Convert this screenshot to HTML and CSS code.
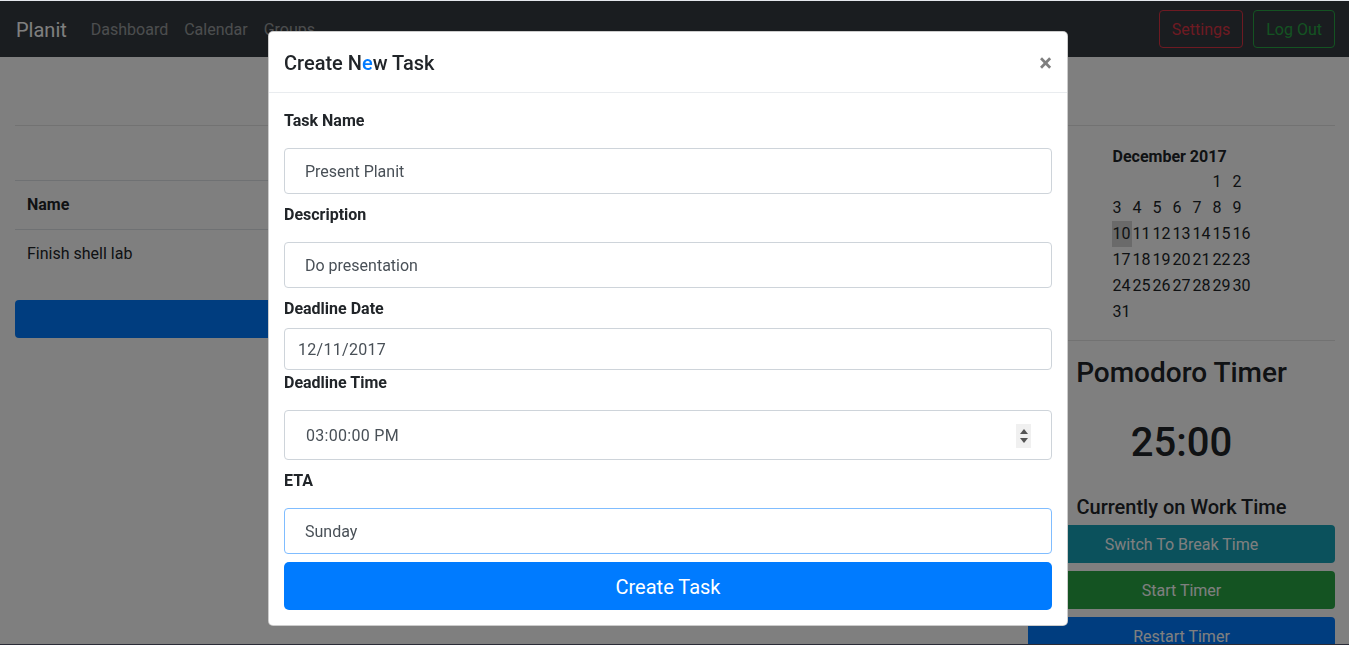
FILE: index.html
```html
<!DOCTYPE html>
<html lang="en">
<head>
<meta charset="utf-8">
<title>Planit</title>
<link rel="stylesheet" href="styles.css">
</head>
<body>
<div class="topline"></div>
<nav class="navbar">
  <a class="brand">Planit</a>
  <a class="nav-link">Dashboard</a>
  <a class="nav-link">Calendar</a>
  <a class="nav-link">Groups</a>
  <div class="nav-right">
    <button class="btn-outline danger">Settings</button>
    <button class="btn-outline success">Log Out</button>
  </div>
</nav>

<main class="container">
  <hr class="rule top-rule">
  <div class="layout">
    <section class="left-col">
      <table class="task-table">
        <thead><tr><th>Name</th></tr></thead>
        <tbody><tr><td>Finish shell lab</td></tr></tbody>
      </table>
      <button class="btn-block primary">New Task</button>
    </section>
    <aside class="right-col">
      <div class="calendar">
        <div class="cal-title">December 2017</div>
        <table class="cal-grid">
          <tr><td></td><td></td><td></td><td></td><td></td><td>1</td><td>2</td></tr>
          <tr><td>3</td><td>4</td><td>5</td><td>6</td><td>7</td><td>8</td><td>9</td></tr>
          <tr><td class="today">10</td><td>11</td><td>12</td><td>13</td><td>14</td><td>15</td><td>16</td></tr>
          <tr><td>17</td><td>18</td><td>19</td><td>20</td><td>21</td><td>22</td><td>23</td></tr>
          <tr><td>24</td><td>25</td><td>26</td><td>27</td><td>28</td><td>29</td><td>30</td></tr>
          <tr><td>31</td><td></td><td></td><td></td><td></td><td></td><td></td></tr>
        </table>
      </div>
      <div class="pomodoro">
        <h3 class="pomo-title">Pomodoro Timer</h3>
        <h1 class="pomo-time">25:00</h1>
        <h5 class="pomo-mode">Currently on Work Time</h5>
        <div class="pomo-buttons">
          <button class="btn-block info">Switch To Break Time</button>
          <button class="btn-block success-fill">Start Timer</button>
          <button class="btn-block primary">Restart Timer</button>
        </div>
      </div>
    </aside>
  </div>
</main>

<div class="backdrop"></div>
<div class="bottomline"></div>

<div class="modal">
  <div class="modal-header">
    <h5 class="modal-title">Create N<span class="accent">e</span>w Task</h5>
    <span class="close">&times;</span>
  </div>
  <form class="modal-body">
    <label class="lbl">Task Name</label>
    <input class="field f46 mt16" type="text" value="Present Planit">
    <label class="lbl mt8">Description</label>
    <input class="field f46 mt16" type="text" value="Do presentation">
    <label class="lbl mt8">Deadline Date</label>
    <div class="field f42 mt8 date-field">12/11/2017</div>
    <label class="lbl">Deadline Time</label>
    <div class="field f50 mt16 time-field">
      <span>03:00:00 PM</span>
      <span class="spinner"><span class="tri up"></span><span class="tri down"></span></span>
    </div>
    <label class="lbl mt8">ETA</label>
    <input class="field f46 mt16 focused" type="text" value="Sunday">
    <button type="button" class="submit mt8">Create Task</button>
  </form>
</div>
</body>
</html>
```

FILE: styles.css
```css
* { box-sizing: border-box; }
html, body { margin: 0; padding: 0; }
body {
  font-family: Roboto, "Liberation Sans", sans-serif;
  font-size: 16px;
  line-height: 24px;
  color: #212529;
  background: #fff;
  height: 645px;
  overflow: hidden;
}
.topline { height: 1px; background: #e4e7ec; }

.navbar {
  height: 56px;
  background: #343a40;
  display: flex;
  align-items: center;
  padding: 1px 14px 0 16px;
}
.brand { color: #fff; font-size: 20px; line-height: 30px; margin-right: 16px; }
.nav-link { color: rgba(255,255,255,.5); padding: 0 8px; }
.nav-right { margin-left: auto; display: flex; gap: 10px; margin-top: -1px; }
.btn-outline {
  font: inherit;
  height: 38px;
  padding: 2px 12px 0;
  background: transparent;
  border: 1px solid;
  border-radius: 4px;
}
.btn-outline.danger { color: #dc3545; border-color: #dc3545; }
.btn-outline.success { color: #28a745; border-color: #28a745; }

.container { padding: 0 14px 0 15px; }
.rule { border: 0; border-top: 1px solid rgba(0,0,0,.1); margin: 0; }
.top-rule { margin-top: 68px; margin-bottom: 16px; }
.layout { display: grid; grid-template-columns: 1fr 307px; column-gap: 30px; }

.task-table { width: 100%; border-collapse: collapse; margin-top: 38px; }
.task-table th, .task-table td {
  text-align: left;
  padding: 12px;
  border-top: 1px solid #dee2e6;
}
.task-table th { font-weight: 700; }
.btn-block {
  display: block;
  width: 100%;
  height: 38px;
  font: inherit;
  color: #fff;
  border: 0;
  border-radius: 4px;
  padding: 2px 0 0;
}
.left-col .btn-block { margin-top: 22px; }
.primary { background: #007bff; }
.info { background: #17a2b8; }
.success-fill { background: #28a745; }

.calendar { display: flex; flex-direction: column; align-items: center; margin-top: 2px; }
.cal-title { width: 140px; font-weight: 700; line-height: 25px; padding-left: 1px; }
.cal-grid { border-collapse: collapse; width: 140px; }
.cal-grid td { width: 20px; height: 26px; padding: 0 0 0 1px; text-align: left; }
.cal-grid td.today { background: #d4d4d4; }

.pomodoro { border-top: 1px solid rgba(0,0,0,.1); margin-top: 15px; text-align: center; }
.pomo-title { font-size: 28px; font-weight: 500; line-height: 34px; margin: 15px 0 0; }
.pomo-time { font-size: 40px; font-weight: 500; line-height: 48px; margin: 29px 0 0; }
.pomo-mode { font-size: 20px; font-weight: 500; line-height: 24px; margin: 28px 0 0; }
.pomo-buttons { display: flex; flex-direction: column; gap: 8px; margin-top: 6px; }

.backdrop { position: fixed; left: 0; right: 0; top: 1px; bottom: 0; background: rgba(0,0,0,.5); }
.bottomline { position: fixed; left: 0; right: 0; bottom: 0; height: 1px; background: #2a2b36; }

.modal {
  position: absolute;
  top: 31px;
  left: 268px;
  width: 800px;
  background: #fff;
  border: 1px solid rgba(0,0,0,.2);
  border-radius: 5px;
}
.modal-header {
  display: flex;
  align-items: center;
  justify-content: space-between;
  padding: 16px 15px 14px 15px;
  border-bottom: 1px solid #e9ecef;
}
.modal-title { margin: 0; font-size: 20px; font-weight: 500; line-height: 30px; }
.accent { color: #007bff; }
.close { font-size: 24px; font-weight: 700; color: #000; opacity: .5; line-height: 30px; margin-right: 0; }

.modal-body { padding: 15px; display: flex; flex-direction: column; }
.lbl { font-weight: 700; line-height: 22px; height: 24px; padding-top: 2px; }
.mt8 { margin-top: 8px; }
.mt16 { margin-top: 16px; }
.field {
  font: inherit;
  color: #495057;
  border: 1px solid #ced4da;
  border-radius: 4px;
  padding: 0 20px;
  background: #fff;
  outline: none;
  width: 100%;
}
.f46 { height: 46px; }
.f42 { height: 42px; }
.f50 { height: 50px; }
.date-field { display: flex; align-items: center; padding-left: 13px; padding-top: 1px; letter-spacing: .3px; }
.time-field { display: flex; align-items: center; justify-content: space-between; padding-left: 21px; padding-right: 20px; padding-top: 1px; letter-spacing: .3px; }
.spinner {
  width: 15px; height: 24px; background: #f0f0f0;
  display: flex; flex-direction: column; align-items: center; justify-content: center; gap: 4px;
}
.tri { width: 0; height: 0; border-left: 4px solid transparent; border-right: 4px solid transparent; }
.tri.up { border-bottom: 5px solid #555; }
.tri.down { border-top: 5px solid #555; }
.focused { border-color: #80bdff; }
.submit {
  height: 48px;
  font: inherit;
  font-size: 20px;
  color: #fff;
  background: #007bff;
  border: 0;
  border-radius: 5px;
  padding-top: 2px;
}
```
